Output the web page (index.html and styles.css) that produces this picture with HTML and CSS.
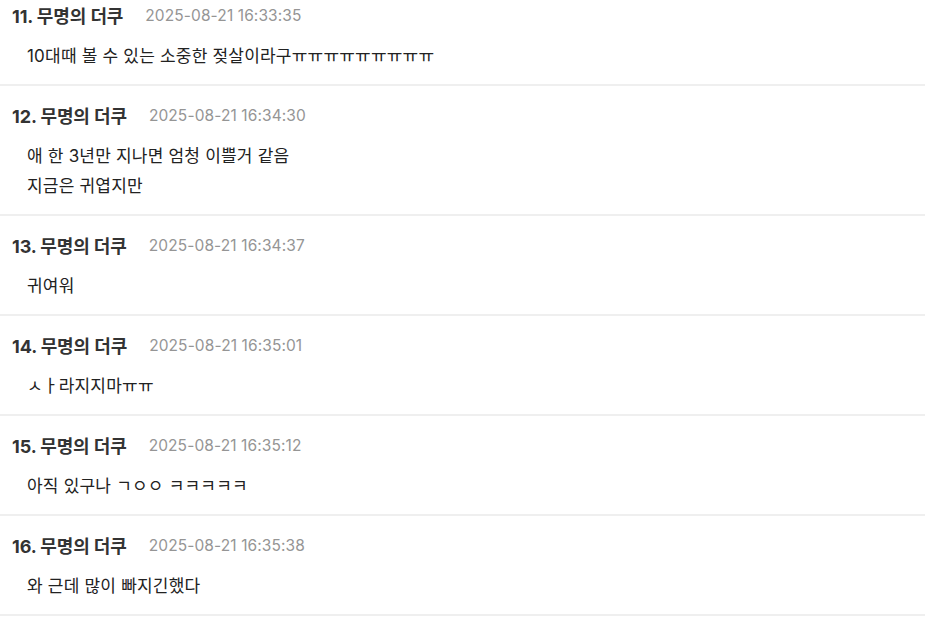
FILE: index.html
```html
<!DOCTYPE html>
<html lang="ko">
<head>
<meta charset="utf-8">
<link rel="stylesheet" href="styles.css">
</head>
<body>
<ul class="comments">
  <li class="comment">
    <div class="head"><span class="author">11. 무명의 더쿠</span><span class="date">2025-08-21 16:33:35</span></div>
    <div class="body">10대때 볼 수 있는 소중한 젖살이라구ㅠㅠㅠㅠㅠㅠㅠㅠㅠ</div>
  </li>
  <li class="comment">
    <div class="head"><span class="author">12. 무명의 더쿠</span><span class="date">2025-08-21 16:34:30</span></div>
    <div class="body">애 한 3년만 지나면 엄청 이쁠거 같음<br>지금은 귀엽지만</div>
  </li>
  <li class="comment">
    <div class="head"><span class="author">13. 무명의 더쿠</span><span class="date">2025-08-21 16:34:37</span></div>
    <div class="body">귀여워</div>
  </li>
  <li class="comment">
    <div class="head"><span class="author">14. 무명의 더쿠</span><span class="date">2025-08-21 16:35:01</span></div>
    <div class="body">ㅅㅏ라지지마ㅠㅠ</div>
  </li>
  <li class="comment">
    <div class="head"><span class="author">15. 무명의 더쿠</span><span class="date">2025-08-21 16:35:12</span></div>
    <div class="body">아직 있구나 ㄱㅇㅇ ㅋㅋㅋㅋㅋ</div>
  </li>
  <li class="comment">
    <div class="head"><span class="author">16. 무명의 더쿠</span><span class="date">2025-08-21 16:35:38</span></div>
    <div class="body">와 근데 많이 빠지긴했다</div>
  </li>
</ul>
</body>
</html>
```

FILE: styles.css
```css
html, body {
  margin: 0;
  padding: 0;
  background: #ffffff;
}
body {
  font-family: "Inter", "Noto Sans CJK KR", sans-serif;
  color: #222;
  overflow: hidden;
}
.comments {
  list-style: none;
  margin: -14px 0 0 0;
  padding: 0;
}
.comment {
  padding: 18px 0 13px 0;
  border-bottom: 2px solid #efefef;
}
.head {
  display: flex;
  align-items: center;
  gap: 22px;
  height: 22px;
  padding-left: 12px;
}
.author {
  font-size: 18px;
  font-weight: 700;
  color: #333;
  letter-spacing: -0.1px;
}
.date {
  font-size: 15.5px;
  color: #959595;
  letter-spacing: 0.1px;
}
.body {
  margin-top: 15px;
  padding-left: 27px;
  font-size: 17px;
  line-height: 30px;
  color: #222;
  letter-spacing: 0.2px;
}
```
